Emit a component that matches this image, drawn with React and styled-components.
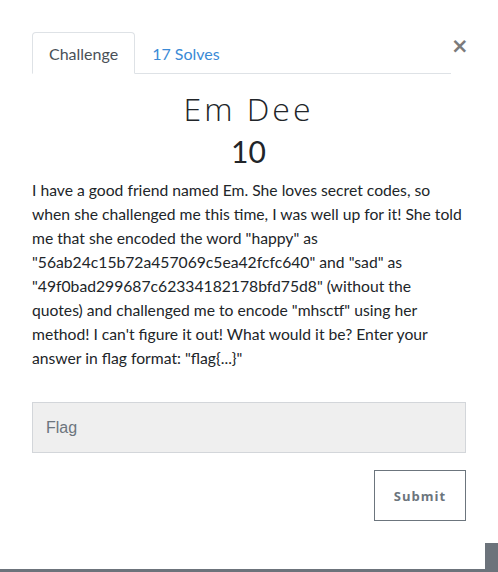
import React, { Component } from 'react'
import styled, { createGlobalStyle } from 'styled-components'

const Global = createGlobalStyle`
  html, body {
    margin: 0;
    padding: 0;
    background: #ffffff;
  }
  body {
    font-family: Lato, 'Open Sans', sans-serif;
    color: #212529;
  }
`

const Page = styled.div`
  display: flex;
  flex-direction: row;
  width: 498px;
  height: 572px;
  overflow: hidden;
`

const Modal = styled.div`
  width: 485px;
  height: 572px;
  box-sizing: border-box;
  border-bottom: 3px solid #6c737b;
  padding: 32px 20px 0 32px;
`

const Rail = styled.div`
  flex: 1;
  display: flex;
  flex-direction: column;
  justify-content: flex-end;
`

const Thumb = styled.div`
  height: 29px;
  background: #6c737b;
`

const Header = styled.div`
  display: flex;
  flex-direction: row;
  align-items: flex-start;
`

const Tabs = styled.div`
  flex: 1;
  display: flex;
  border-bottom: 1px solid #dee2e6;
  height: 41px;
`

const Tab = styled.div`
  box-sizing: border-box;
  padding: 0 16px;
  display: flex;
  align-items: center;
  font-size: 16px;
  color: ${p => (p.active ? '#495057' : '#3a8ad6')};
  border: 1px solid ${p => (p.active ? '#dee2e6' : 'transparent')};
  border-bottom: ${p => (p.active ? '1px solid #fff' : '0')};
  border-radius: 4px 4px 0 0;
  background: #fff;
  margin-bottom: ${p => (p.active ? '-1px' : '0')};
  height: ${p => (p.active ? '42px' : '41px')};
`

const Close = styled.div`
  width: 13px;
  margin: 4px 1px 0 0;
  font-family: 'DejaVu Sans', sans-serif;
  font-size: 21px;
  font-weight: bold;
  line-height: 1;
  color: #7b7b7b;
`

const Title = styled.h1`
  margin: 15px 0 0;
  text-align: center;
  font-family: 'Open Sans', Lato, sans-serif;
  font-weight: 300;
  font-size: 32px;
  letter-spacing: 3px;
  line-height: 40px;
  color: #212529;
`

const Points = styled.h3`
  margin: 5px 0 0;
  text-align: center;
  font-family: Lato, sans-serif;
  font-weight: 400;
  font-size: 30px;
  line-height: 34px;
  color: #212529;
`

const Description = styled.p`
  margin: 10px 0 0;
  width: 432px;
  font-size: 15.7px;
  line-height: 24px;
  color: #212529;
`

const Form = styled.div`
  margin-top: 32px;
  width: 434px;
  display: flex;
  flex-direction: column;
  align-items: flex-end;
  gap: 17px;
`

const Input = styled.input`
  width: 100%;
  height: 51px;
  box-sizing: border-box;
  background: #efefef;
  border: 1px solid #d3d6da;
  padding: 0 13px;
  font-family: 'Liberation Sans', Arial, sans-serif;
  font-size: 16px;
  color: #495057;
  outline: none;
  &::placeholder {
    color: #6c757d;
  }
`

const SubmitButton = styled.button`
  width: 92px;
  height: 51px;
  background: #fff;
  border: 1px solid #6c757d;
  border-radius: 0;
  font-family: 'Open Sans', sans-serif;
  font-weight: 700;
  font-size: 13px;
  letter-spacing: 1px;
  color: #6c757d;
`

const description =
  'I have a good friend named Em. She loves secret codes, so when she challenged me this ' +
  'time, I was well up for it! She told me that she encoded the word "happy" as ' +
  '"56ab24c15b72a457069c5ea42fcfc640" and "sad" as "49f0bad299687c62334182178bfd75d8" ' +
  '(without the quotes) and challenged me to encode "mhsctf" using her method! I can\'t ' +
  'figure it out! What would it be? Enter your answer in flag format: "flag{...}"'

class App extends Component {
  state = {
    tab: 'challenge',
    flag: ''
  }
  render() {
    return (
      <Page>
        <Global />
        <Modal>
          <Header>
            <Tabs>
              <Tab active={this.state.tab === 'challenge'}>Challenge</Tab>
              <Tab active={this.state.tab === 'solves'}>17 Solves</Tab>
            </Tabs>
            <Close>×</Close>
          </Header>
          <Title>Em Dee</Title>
          <Points>10</Points>
          <Description>{description}</Description>
          <Form>
            <Input
              placeholder="Flag"
              value={this.state.flag}
              onChange={e => this.setState({ flag: e.target.value })}
            />
            <SubmitButton>Submit</SubmitButton>
          </Form>
        </Modal>
        <Rail>
          <Thumb />
        </Rail>
      </Page>
    )
  }
}

export default App
